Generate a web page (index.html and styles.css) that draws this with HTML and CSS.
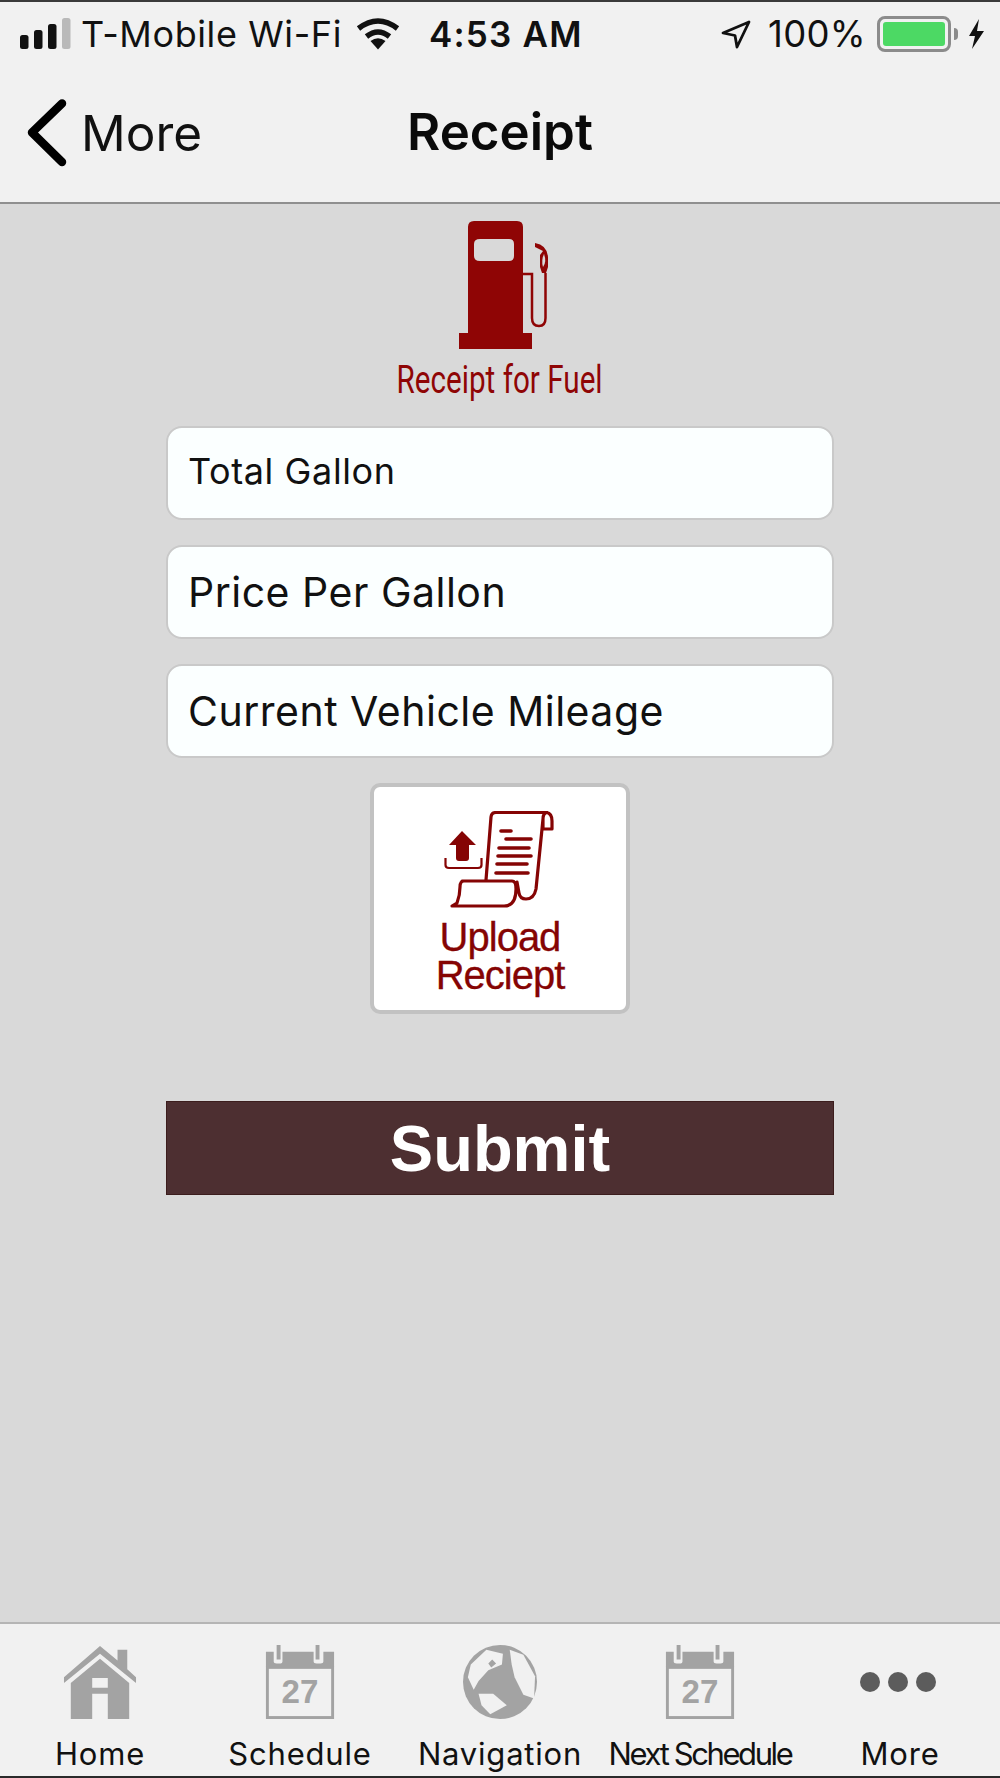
FILE: index.html
```html
<!DOCTYPE html>
<html lang="en">
<head>
<meta charset="utf-8">
<title>Receipt</title>
<link rel="stylesheet" href="styles.css">
</head>
<body>
<div class="phone">
  <header class="top">
    <div class="status">
      <div class="status-left">
        <svg class="signal" width="52" height="32" viewBox="0 0 52 32"><rect x="1" y="17" width="8.500" height="14" rx="2.500" fill="#111"/><rect x="15" y="12" width="8.500" height="19" rx="2.500" fill="#111"/><rect x="29" y="6" width="8.500" height="25" rx="2.500" fill="#111"/><rect x="43" y="0" width="8.500" height="31" rx="2.500" fill="#b9b9b9"/></svg>
        <span class="carrier">T-Mobile Wi-Fi</span>
        <svg class="wifi" width="44" height="32" viewBox="0 0 44 32"><path d="M22 31.500 L14.500 23 Q22 17.500 29.500 23 Z" fill="#111"/><path d="M10.500 18.500 Q22 9.500 33.500 18.500" fill="none" stroke="#111" stroke-width="5.500"/><path d="M2.500 10.500 Q22 -4.500 41.500 10.500" fill="none" stroke="#111" stroke-width="5.500"/></svg>
      </div>
      <span class="clock">4:53 AM</span>
      <div class="status-right">
        <svg class="loc" width="30" height="30" viewBox="0 0 30 30"><path d="M28 3 L2 14 L14 16.500 L16 28 Z" fill="none" stroke="#111" stroke-width="2.800" stroke-linejoin="round"/></svg>
        <span class="battery-pct">100%</span>
        <div class="battery"><div class="battery-fill"></div></div>
        <div class="battery-tip"></div>
        <svg class="bolt" width="18" height="32" viewBox="0 0 18 32"><path d="M12 1 L2 18 L8 18 L5 31 L17 13 L10 13 Z" fill="#111"/></svg>
      </div>
    </div>
    <nav class="navbar">
      <div class="back">
        <svg class="chev" width="40" height="68" viewBox="0 0 40 68"><path d="M35 4.500 L5 33.500 L35 63" fill="none" stroke="#000" stroke-width="8.500" stroke-linecap="round" stroke-linejoin="round"/></svg>
        <span class="back-label">More</span>
      </div>
      <h1 class="title">Receipt</h1>
    </nav>
  </header>

  <main class="content">
    <div class="fuel">
      <svg class="pump" width="94" height="129" viewBox="0 0 94 129">
        <path d="M9 112 V6 Q9 0 15 0 H58 Q64 0 64 6 V112 H73 V128 H0 V112 Z M21 18 Q15 18 15 23 V35 Q15 40 21 40 H50 Q55 40 55 35 V23 Q55 18 50 18 Z" fill="#8f0505" fill-rule="evenodd"/>
        <path d="M64 53 H73 V97 Q73 105 80 105 Q86.500 105 86.500 97 V52" fill="none" stroke="#8f0505" stroke-width="2.500"/>
        <path d="M76 22 Q88 24 89 36 V46 L87 52 H83 L81 46 V34 L84 30 L76 26 Z" fill="#8f0505"/>
        <path d="M85 33 Q82 39 84 46 Q88 41 85 33 Z" fill="#d8d8d8"/>
      </svg>
      <div class="fuel-label">Receipt for Fuel</div>
    </div>

    <form class="form">
      <div class="field field-small">Total Gallon</div>
      <div class="field">Price Per Gallon</div>
      <div class="field">Current Vehicle Mileage</div>
      <button type="button" class="upload">
        <svg class="upload-icon" width="110" height="98" viewBox="0 0 110 98">
          <path d="M18 20 L32 34 H25 V47 Q25 50 22 50 H15 Q12 50 12 47 V34 H5 Z" fill="#850404"/>
          <path d="M1.500 47 V54 Q1.500 57 5 57 H34 Q37.500 57 37.500 54 V47" fill="none" stroke="#850404" stroke-width="2.200"/>
          <path d="M42 69 L47 6 Q47.500 1.500 52 1.500 H102 Q108 2 108 10 V18 H99 V8 Q99 2 103 1.500 M99 8 L92 78 Q90 88 82 88 Q76 88 75 82 L73 71 M18 70 H68 Q72 70 72 78 Q72 95 60 95 H8 L13 92 Q16 84 16 76 Q16 70 20 70" fill="none" stroke="#850404" stroke-width="3.200" stroke-linejoin="round" stroke-linecap="round"/>
          <path d="M57 20 H67 M62 28 H87 M55 37 H85 M54 45 H87 M53 53 H83 M52 62 H84" stroke="#850404" stroke-width="3.600" stroke-linecap="round" fill="none"/>
        </svg>
        <span class="upload-label">Upload<br>Reciept</span>
      </button>
      <button type="button" class="submit">Submit</button>
    </form>
  </main>

  <footer class="tabs">
    <div class="tab">
      <svg class="tab-icon" width="74" height="74" viewBox="0 0 76 76">
        <path d="M38 1 L56 16 V5 H66 V25 L75 33 V39 L38 9 L1 39 V33 Z" fill="#a3a3a3"/>
        <path d="M38 14 L68 39 V76 H46 V50 H30 V76 H8 V39 Z M30 34 V44 H46 V34 Z" fill="#a3a3a3" fill-rule="evenodd"/>
      </svg>
      <span class="tab-label">Home</span>
    </div>
    <div class="tab">
      <svg class="tab-icon" width="74" height="74" viewBox="0 0 76 76">
        <path d="M3 7 H11 V17 Q11 19 14 19 H18 Q20 19 20 17 V7 H52 V17 Q52 19 55 19 H59 Q62 19 62 17 V7 H73 V22 H3 Z" fill="#a3a3a3"/>
        <path d="M14 0 H18 V15 H14 Z M54 0 H58 V15 H54 Z" fill="#a3a3a3"/>
        <rect x="4.500" y="23" width="67" height="51.500" fill="none" stroke="#a3a3a3" stroke-width="3"/>
        <text x="38" y="60" class="cal-num">27</text>
      </svg>
      <span class="tab-label">Schedule</span>
    </div>
    <div class="tab">
      <svg class="tab-icon" width="74" height="74" viewBox="0 0 76 76">
        <circle cx="38" cy="38" r="38" fill="#a3a3a3"/>
        <path d="M24 5 L41 9 L40 20 L26 26 L16 37 L11 46 L5 33 L8 20 Z M30 15 L34 19 L29 23 L26 19 Z" fill="#f1f1f1" fill-rule="evenodd"/>
        <path d="M48 5 L62 10 L74 32 L73 55 L62 51 L53 33 L50 20 Z" fill="#f1f1f1"/>
        <path d="M16 50 L31 50 L45 62 L28 71 L19 62 Z" fill="#f1f1f1"/>
      </svg>
      <span class="tab-label">Navigation</span>
    </div>
    <div class="tab">
      <svg class="tab-icon" width="74" height="74" viewBox="0 0 76 76">
        <path d="M3 7 H11 V17 Q11 19 14 19 H18 Q20 19 20 17 V7 H52 V17 Q52 19 55 19 H59 Q62 19 62 17 V7 H73 V22 H3 Z" fill="#a3a3a3"/>
        <path d="M14 0 H18 V15 H14 Z M54 0 H58 V15 H54 Z" fill="#a3a3a3"/>
        <rect x="4.500" y="23" width="67" height="51.500" fill="none" stroke="#a3a3a3" stroke-width="3"/>
        <text x="38" y="60" class="cal-num">27</text>
      </svg>
      <span class="tab-label tab-label-tight">Next Schedule</span>
    </div>
    <div class="tab">
      <svg class="tab-icon" width="84" height="74" viewBox="0 0 84 74">
        <circle cx="12" cy="37" r="10" fill="#5c5c5c"/><circle cx="40" cy="37" r="10" fill="#5c5c5c"/><circle cx="68" cy="37" r="10" fill="#5c5c5c"/>
      </svg>
      <span class="tab-label">More</span>
    </div>
  </footer>
</div>
</body>
</html>
```

FILE: styles.css
```css
* { box-sizing: border-box; }
html, body { margin: 0; padding: 0; }
body { width: 1000px; height: 1778px; overflow: hidden; font-family: "Inter", "Liberation Sans", sans-serif; background: #d9d9d9; }
.phone { width: 1000px; height: 1778px; display: flex; flex-direction: column; border-top: 2px solid #3a3a3a; border-bottom: 2px solid #2a2a2a; }

.top { height: 202px; background: #f1f1f1; border-bottom: 2px solid #8f8f8f; flex: none; }
.status { height: 62px; position: relative; display: flex; align-items: center; justify-content: space-between; padding: 2px 0 0 19px; color: #111; }
.status-left { display: flex; align-items: center; }
.signal { margin-right: 10px; }
.carrier { font-size: 36px; letter-spacing: 0.600px; margin-right: 14px; font-weight: 400; }
.clock { position: absolute; left: 429px; top: 11px; font-weight: 600; font-size: 35px; letter-spacing: 1.200px; }
.status-right { display: flex; align-items: center; padding-right: 15px; }
.loc { margin-right: 17px; }
.battery-pct { font-size: 36.500px; margin-right: 11px; letter-spacing: 0.300px; }
.battery { width: 74px; height: 36px; border: 3px solid #8b8b8b; border-radius: 8px; padding: 3px; }
.battery-fill { height: 100%; background: #4cd964; border-radius: 3px; }
.battery-tip { width: 4px; height: 12px; margin: 0 9px 0 3px; background: #8b8b8b; border-radius: 0 5px 5px 0; }

.navbar { height: 137px; position: relative; display: flex; align-items: center; justify-content: center; }
.back { position: absolute; left: 27px; top: 35px; display: flex; align-items: center; gap: 14px; }
.back-label { font-size: 49.500px; color: #111; font-weight: 400; }
.title { margin: 0; font-size: 51px; font-weight: 600; color: #0a0a0a; position: relative; top: -1px; }

.content { flex: 1; background: #d9d9d9; display: flex; flex-direction: column; align-items: center; padding-top: 17px; }
.fuel { display: flex; flex-direction: column; align-items: center; }
.pump { display: block; margin-left: 12px; }
.fuel-label { font-family: "Roboto", sans-serif; font-size: 39px; color: #8f0505; margin-top: 9px; line-height: 42px; white-space: nowrap; transform: scaleX(0.76); }

.form { width: 670px; margin-top: 25px; display: flex; flex-direction: column; align-items: center; }
.field { width: 668px; height: 94px; background: #fbffff; border: 2px solid #c9c9c9; border-radius: 16px; padding: 0 0 0 20px; margin-bottom: 25px; display: flex; align-items: center; font-size: 41px; color: #111; letter-spacing: 0.500px; }
.field-small { font-size: 36px; padding-bottom: 4px; letter-spacing: 0.600px; }

.upload { width: 260px; height: 231px; margin: 0; background: #fff; border: 4px solid #c2c2c2; border-radius: 10px; padding: 24px 0 0; display: flex; flex-direction: column; align-items: center; font-family: "Liberation Sans", sans-serif; }
.upload-icon { display: block; margin-left: -2px; }
.upload-label { font-size: 40px; line-height: 38px; color: #850404; margin-top: 9px; letter-spacing: -1px; -webkit-text-stroke: 0.300px #850404; }

.submit { width: 668px; height: 94px; margin-top: 87px; background: #4d2f31; border: 1px solid #3c1d1d; color: #fff; font-family: "Liberation Sans", sans-serif; font-weight: 700; font-size: 65px; padding: 0; }

.tabs { height: 154px; flex: none; background: #f1f1f1; border-top: 2px solid #b5b5b5; display: flex; padding: 21px 0 0 0; }
.tab { flex: 1; display: flex; flex-direction: column; align-items: center; }
.tab-icon { display: block; flex: none; }
.tab-label { font-size: 31px; line-height: 36px; color: #111; margin-top: 17px; letter-spacing: 0.800px; white-space: nowrap; }
.tab-label-tight { letter-spacing: -2.400px; word-spacing: 0; }
.cal-num { font-family: "Liberation Sans", sans-serif; font-weight: 700; font-size: 34px; fill: #a3a3a3; text-anchor: middle; }
```
